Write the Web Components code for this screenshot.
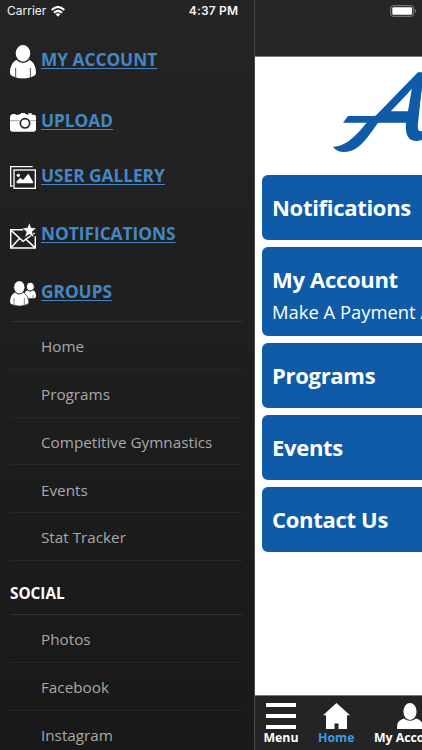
<!DOCTYPE html>
<html lang="en">
<head>
<meta charset="utf-8">
<title>Home</title>
<style>
    body {
        margin: 0;
        overflow: hidden;
        background: #222;
        font-family: "Open Sans", "Noto Sans", sans-serif;
    }
</style>
</head>
<body>
<app-shell>
    <status-bar slot="status" carrier="Carrier" time="4:37 PM"></status-bar>

    <side-drawer slot="drawer">
        <menu-link icon="person" style="height:60px">MY ACCOUNT</menu-link>
        <menu-link icon="camera" style="height:61px">UPLOAD</menu-link>
        <menu-link icon="gallery" style="height:50px">USER GALLERY</menu-link>
        <menu-link icon="mail" style="height:66px">NOTIFICATIONS</menu-link>
        <menu-link icon="group" style="height:50px">GROUPS</menu-link>
        <menu-section>
            <menu-item>Home</menu-item>
            <menu-item>Programs</menu-item>
            <menu-item>Competitive Gymnastics</menu-item>
            <menu-item>Events</menu-item>
            <menu-item>Stat Tracker</menu-item>
        </menu-section>
        <menu-section heading="SOCIAL">
            <menu-item>Photos</menu-item>
            <menu-item>Facebook</menu-item>
            <menu-item>Instagram</menu-item>
        </menu-section>
    </side-drawer>

    <page-panel slot="page">
        <brand-logo></brand-logo>
        <nav-card>Notifications</nav-card>
        <nav-card>My Account<span slot="detail">Make A Payment A</span></nav-card>
        <nav-card>Programs</nav-card>
        <nav-card>Events</nav-card>
        <nav-card>Contact Us</nav-card>
        <tab-item slot="tabs" icon="bars">Menu</tab-item>
        <tab-item slot="tabs" icon="house" active>Home</tab-item>
        <tab-item slot="tabs" icon="user">My Account</tab-item>
    </page-panel>
</app-shell>

<script>
const icons = {
    person: `<svg width="26" height="34" viewBox="0 0 78 102" fill="#fff">
        <path d="M24 43C10 47 0 62 0 84q0 7 8 10 31 13 62 0 8-3 8-10C78 62 68 47 54 43q-15 11-30 0z"/>
        <ellipse cx="39" cy="25" rx="24" ry="27" stroke="#232323" stroke-width="4"/>
        <path d="M17 69v28M61 69v28" stroke="#555" stroke-width="3"/></svg>`,
    camera: `<svg width="26" height="19" viewBox="0 0 78 57" fill="#fff">
        <path d="M5 3h12v4H5zM28 3h5V0h12v3h5v5H28zM55 1h10v5H55z"/>
        <rect y="5" width="78" height="51" rx="7"/>
        <path d="M0 23h78" stroke="#777" stroke-width="2"/>
        <circle cx="45" cy="31" r="18"/>
        <circle cx="45" cy="31" r="14" stroke="#222" stroke-width="5"/></svg>`,
    gallery: `<svg width="26" height="23" viewBox="0 0 78 69" fill="none" stroke="#fff">
        <path d="M68 2H2v58h6" stroke-width="4"/>
        <rect x="12" y="12" width="64" height="55" stroke-width="4"/>
        <path d="M20 52V46l11-11 8 7 16-19 14 24v5z" fill="#fff" stroke="none"/>
        <circle cx="25" cy="28" r="5" fill="#fff" stroke="none"/></svg>`,
    mail: `<svg width="26" height="26" viewBox="0 0 78 78" fill="none" stroke="#fff" stroke-width="4.500">
        <path d="M40 20H2v55h74V40"/>
        <path d="M4 23l35 32 35-25M4 73l25-27M74 73L48 49"/>
        <path d="M58-1l6 15 16 1-13 11 5 18-14-10-14 10 5-18-13-11 16-1z" fill="#fff" stroke="#202020" stroke-width="2"/></svg>`,
    group: `<svg width="26" height="25" viewBox="0 0 78 75" fill="#fff">
        <path d="M51 28C42 34 40 42 45 52h29q4-1 4-6 0-13-8-18-9 6-19 0z"/>
        <path d="M69 42v10" stroke="#555" stroke-width="2"/>
        <ellipse cx="61" cy="17" rx="12" ry="13" stroke="#1f1f1f" stroke-width="3"/>
        <path d="M17 33C6 36-1 49-1 63q0 5 7 8 22 9 44 0 7-3 7-8 0-16-17-30-11 6-23 0z" stroke="#1f1f1f" stroke-width="2"/>
        <ellipse cx="28" cy="19" rx="17" ry="20" stroke="#1f1f1f" stroke-width="3"/>
        <path d="M12 51v21M43 51v21" stroke="#555" stroke-width="2"/></svg>`,
    bars: `<svg width="30" height="26" viewBox="0 0 30 26" fill="#fff">
        <path d="M0 0h30v4H0zM0 11h30v4H0zM0 22h30v4H0z"/></svg>`,
    house: `<svg width="27" height="26" viewBox="0 0 27 26" fill="#fff">
        <path d="M13.500 0L27 12.200h-3V26H15.500v-5.500h-4V26H3V12.200H0z"/></svg>`,
    user: `<svg width="26" height="26" viewBox="0 0 26 26" fill="#fff">
        <ellipse cx="13" cy="8.500" rx="6.600" ry="8.500"/>
        <path d="M0 26c0-6 1-8.500 7-10.500q6 4.500 12 0c6 2 7 4.500 7 10.500z"/></svg>`
};

class AppShell extends HTMLElement {
    constructor() {
        super();
        const shadow = this.attachShadow({ mode: 'open' });
        shadow.innerHTML = `
        <style>
            :host {
                display: grid;
                grid-template-columns: 254px 168px;
                position: relative;
                height: 750px;
                width: 422px;
                overflow: hidden;
            }
            .status {
                position: absolute;
                inset: 0 0 auto 0;
            }
        </style>
        <slot name="drawer"></slot>
        <slot name="page"></slot>
        <div class="status"><slot name="status"></slot></div>
        `;
    }
}

class StatusBar extends HTMLElement {
    constructor() {
        super();
        const shadow = this.attachShadow({ mode: 'open' });
        shadow.innerHTML = `
        <style>
            :host {
                display: grid;
                grid-template-columns: 1fr auto 1fr;
                align-items: center;
                height: 22px;
                padding: 0 5px 0 7px;
                color: #f4f4f4;
                font: 12px/22px Inter, sans-serif;
            }
            .left {
                display: flex;
                align-items: center;
                gap: 5px;
            }
            .time {
                font-weight: 600;
                letter-spacing: .2px;
                padding-left: 3px;
            }
            .battery {
                justify-self: end;
            }
            svg {
                display: block;
            }
        </style>
        <div class="left">
            <span>${this.getAttribute('carrier')}</span>
            <svg width="14" height="11" viewBox="0 0 42 33" fill="none" stroke="#fff" stroke-width="6">
                <path d="M2 12Q21-6 40 12M9 20q12-11 24 0"/>
                <path d="M21 32l-7-7q7-6 14 0z" fill="#fff" stroke="none"/>
            </svg>
        </div>
        <span class="time">${this.getAttribute('time')}</span>
        <svg class="battery" width="27" height="12" viewBox="0 0 27 12">
            <rect x=".7" y=".7" width="23" height="10.600" rx="2.500" fill="none" stroke="#858585"/>
            <rect x="2.300" y="2.200" width="19.800" height="7.600" rx="1" fill="#fff"/>
            <path d="M25 4q2 2 0 4z" fill="#858585"/>
        </svg>
        `;
    }
}

class SideDrawer extends HTMLElement {
    constructor() {
        super();
        const shadow = this.attachShadow({ mode: 'open' });
        shadow.innerHTML = `
        <style>
            :host {
                display: block;
                box-sizing: border-box;
                height: 750px;
                overflow: hidden;
                padding: 30px 11px 0 10px;
                background: linear-gradient(#242424, #1c1c1c 65%, #191919);
            }
        </style>
        <slot></slot>
        `;
    }
}

class MenuLink extends HTMLElement {
    constructor() {
        super();
        const shadow = this.attachShadow({ mode: 'open' });
        shadow.innerHTML = `
        <style>
            :host {
                display: flex;
                align-items: center;
                gap: 5px;
                color: #4587c5;
            }
            svg {
                display: block;
                margin-top: 3px;
            }
            a {
                font-size: 17.250px;
                font-weight: 700;
                line-height: 24px;
                white-space: nowrap;
                text-decoration: underline;
                text-decoration-thickness: 1px;
                text-underline-offset: 2px;
            }
        </style>
        ${icons[this.getAttribute('icon')]}
        <a><slot></slot></a>
        `;
    }
}

class MenuSection extends HTMLElement {
    constructor() {
        super();
        const heading = this.getAttribute('heading');
        const shadow = this.attachShadow({ mode: 'open' });
        shadow.innerHTML = `
        <style>
            :host {
                display: block;
            }
            header {
                box-sizing: border-box;
                height: 5px;
                border-bottom: 1px solid #313131;
            }
            header.titled {
                height: 54px;
                padding-top: 20px;
                color: #fff;
                font-size: 15.300px;
                font-weight: 700;
                line-height: 24px;
            }
        </style>
        <header class="${heading ? 'titled' : ''}">${heading || ''}</header>
        <slot></slot>
        `;
    }
}

class MenuItem extends HTMLElement {
    constructor() {
        super();
        const shadow = this.attachShadow({ mode: 'open' });
        shadow.innerHTML = `
        <style>
            :host {
                display: block;
                box-sizing: border-box;
                height: 47.800px;
                padding: 12.300px 0 0 31px;
                border-bottom: 1px solid #272727;
                color: #a8a8a8;
                font-size: 15.250px;
                line-height: 24px;
                white-space: nowrap;
            }
        </style>
        <slot></slot>
        `;
    }
}

class PagePanel extends HTMLElement {
    constructor() {
        super();
        const shadow = this.attachShadow({ mode: 'open' });
        shadow.innerHTML = `
        <style>
            :host {
                display: flex;
                flex-direction: column;
                box-sizing: border-box;
                height: 750px;
                overflow: hidden;
                border-left: 1px solid #4c4c4c;
                background: #fff;
            }
            header {
                flex: 0 0 56px;
                border-bottom: 1px solid #777;
                background: #262626;
            }
            main {
                flex: 1;
                display: flex;
                flex-direction: column;
                gap: 7.200px;
                padding-left: 7px;
            }
            nav {
                flex: 0 0 54px;
                display: flex;
                gap: 19.500px;
                padding-left: 8.500px;
                border-top: 1px solid #777;
                background: #242424;
            }
        </style>
        <header></header>
        <main><slot></slot></main>
        <nav><slot name="tabs"></slot></nav>
        `;
    }
}

class BrandLogo extends HTMLElement {
    constructor() {
        super();
        const shadow = this.attachShadow({ mode: 'open' });
        shadow.innerHTML = `
        <style>
            :host {
                display: block;
                height: 111px;
                padding-left: 60px;
            }
            svg {
                display: block;
            }
            text {
                font-size: 280px;
                font-weight: 600;
            }
        </style>
        <svg width="100" height="111" viewBox="0 171 300 333" fill="#0f5ba7">
            <clipPath id="upper">
                <path d="M0 171h300v90l-14 107H0z"/>
            </clipPath>
            <g clip-path="url(#upper)">
                <text transform="translate(93 416) skewX(-31)">A</text>
            </g>
            <!-- crossbar, tail and foot flourishes -->
            <path d="M78 348h178v20H63z"/>
            <path d="M150 348C112 396 78 440 33 440c12 20 45 22 72 3 24-17 44-48 63-75l18-22z"/>
            <path d="M274 240L252 368c-4 40 10 56 34 55l14-3v-27c-12 3-14-7-12-25l12-113v-15z"/>
        </svg>
        `;
    }
}

class NavCard extends HTMLElement {
    constructor() {
        super();
        const shadow = this.attachShadow({ mode: 'open' });
        shadow.innerHTML = `
        <style>
            :host {
                display: block;
                width: 220px;
                padding: 17px 10px 18px;
                box-sizing: border-box;
                border-radius: 6px;
                background: #0f5ba7;
                color: #fff;
                white-space: nowrap;
            }
            .title {
                font-size: 22px;
                font-weight: 700;
                letter-spacing: -.3px;
                line-height: 30px;
            }
            ::slotted([slot="detail"]) {
                display: block;
                padding-top: 4px;
                margin-bottom: -9px;
                font-size: 18.400px;
                line-height: 28.500px;
            }
        </style>
        <div class="title"><slot></slot></div>
        <slot name="detail"></slot>
        `;
    }
}

class TabItem extends HTMLElement {
    constructor() {
        super();
        const shadow = this.attachShadow({ mode: 'open' });
        shadow.innerHTML = `
        <style>
            :host {
                display: flex;
                flex-direction: column;
                align-items: center;
                flex: none;
                padding-top: 7px;
                color: #fff;
                font-size: 12.300px;
                font-weight: 700;
                line-height: 18px;
                white-space: nowrap;
            }
            :host([active]) {
                color: #3d9ae6;
            }
            svg {
                display: block;
            }
        </style>
        ${icons[this.getAttribute('icon')]}
        <span><slot></slot></span>
        `;
    }
}

customElements.define('app-shell', AppShell);
customElements.define('status-bar', StatusBar);
customElements.define('side-drawer', SideDrawer);
customElements.define('menu-link', MenuLink);
customElements.define('menu-section', MenuSection);
customElements.define('menu-item', MenuItem);
customElements.define('page-panel', PagePanel);
customElements.define('brand-logo', BrandLogo);
customElements.define('nav-card', NavCard);
customElements.define('tab-item', TabItem);
</script>
</body>
</html>
